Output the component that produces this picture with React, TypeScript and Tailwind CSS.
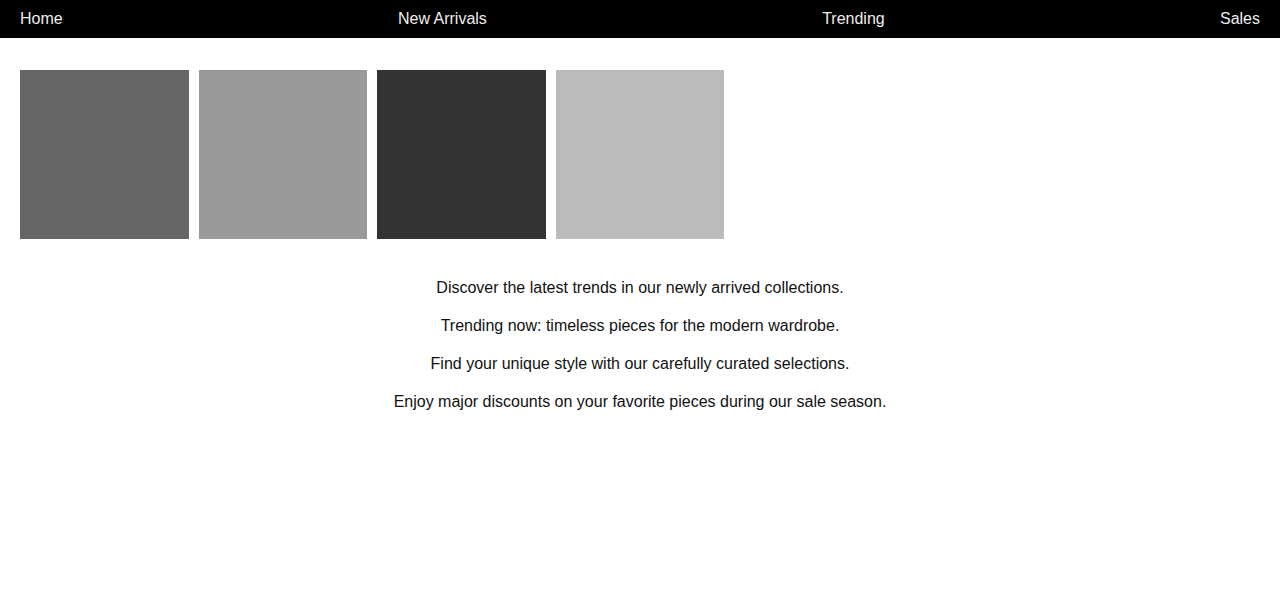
export default function App() {
  const boxes = ["bg-[#666666]", "bg-[#999999]", "bg-[#333333]", "bg-[#bbbbbb]"];
  const lines = [
    "Discover the latest trends in our newly arrived collections.",
    "Trending now: timeless pieces for the modern wardrobe.",
    "Find your unique style with our carefully curated selections.",
    "Enjoy major discounts on your favorite pieces during our sale season.",
  ];
  return (
    <div className="min-h-[600px] bg-white font-['Liberation_Sans',Arial,sans-serif] text-[16px]">
      <nav className="flex h-[38px] items-center justify-between bg-black px-5 text-[#eeeeee]">
        <span>Home</span>
        <span>New Arrivals</span>
        <span>Trending</span>
        <span>Sales</span>
      </nav>
      <div className="px-5 pt-8">
        <div className="flex gap-[10px]">
          {boxes.map((c, i) => (
            <div key={i} className={`h-[169px] w-[168.5px] ${c}`} />
          ))}
        </div>
        <div className="mt-[38px] flex flex-col gap-4 text-center text-[#111111]">
          {lines.map((l, i) => (
            <p key={i} className="leading-[22px]">{l}</p>
          ))}
        </div>
      </div>
    </div>
  );
}
